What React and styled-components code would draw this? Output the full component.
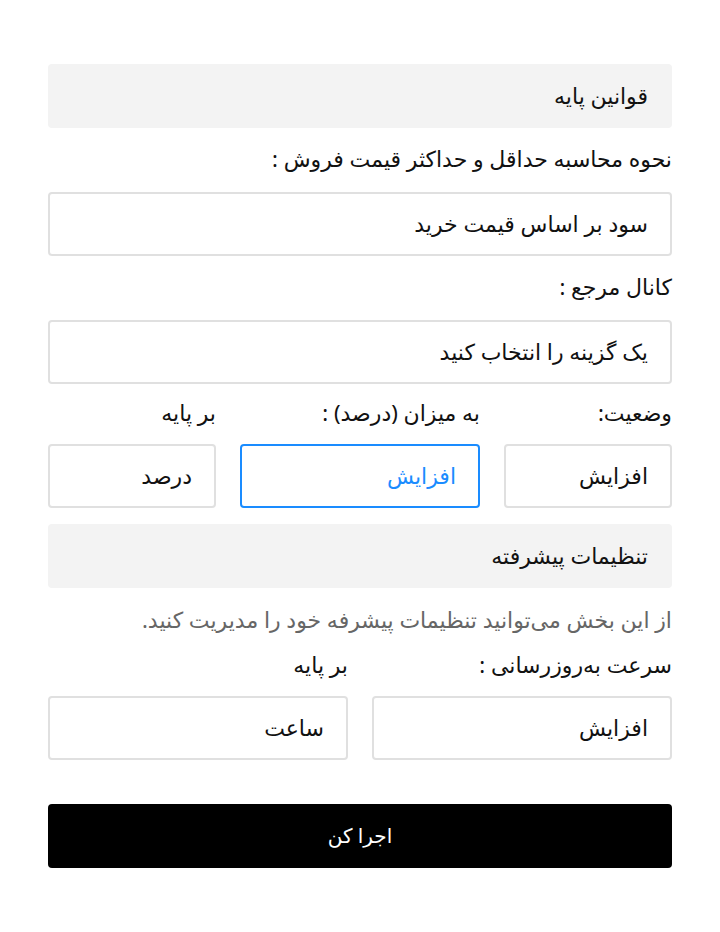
import styled, { createGlobalStyle } from "styled-components";

const GlobalStyle = createGlobalStyle`
  body {
    margin: 0;
    background: #ffffff;
    font-family: "Noto Sans", "DejaVu Sans", sans-serif;
    color: #111111;
  }
`;

const Page = styled.div`
  direction: rtl;
  padding: 64px 48px 64px;
  display: flex;
  flex-direction: column;
  gap: 16px;
`;

const SectionHeader = styled.div`
  height: 64px;
  box-sizing: border-box;
  background: #f3f3f3;
  border-radius: 4px;
  padding: 0 24px 3px;
  display: flex;
  align-items: center;
  font-size: 22px;
`;

const Label = styled.div`
  height: ${(p) => (p.$compact ? "28px" : "32px")};
  box-sizing: border-box;
  padding-bottom: 4px;
  display: flex;
  align-items: center;
  font-size: 22px;
  white-space: nowrap;
`;

const Description = styled.div`
  height: 32px;
  box-sizing: border-box;
  padding-bottom: 3px;
  display: flex;
  align-items: center;
  font-size: 22px;
  color: #666666;
`;

const Field = styled.div`
  height: 64px;
  box-sizing: border-box;
  border: 2px solid ${(p) => (p.$active ? "#1a8cff" : "#e0e0e0")};
  border-radius: 4px;
  padding: 0 22px 3px;
  display: flex;
  align-items: center;
  font-size: 22px;
  color: ${(p) => (p.$active ? "#1a8cff" : "#111111")};
`;

const FieldGrid = styled.div`
  display: grid;
  grid-template-columns: ${(p) => p.$cols};
  column-gap: 24px;
  row-gap: 16px;
`;

const RunButton = styled.button`
  margin-top: 28px;
  height: 64px;
  border: none;
  border-radius: 4px;
  background: #000000;
  color: #ffffff;
  font-family: inherit;
  font-size: 20px;
  padding-bottom: 3px;
  cursor: pointer;
`;

export default function App() {
  return (
    <>
      <GlobalStyle />
      <Page>
        <SectionHeader>قوانین پایه</SectionHeader>
        <Label>نحوه محاسبه حداقل و حداکثر قیمت فروش :</Label>
        <Field>سود بر اساس قیمت خرید</Field>
        <Label>کانال مرجع :</Label>
        <Field>یک گزینه را انتخاب کنید</Field>
        <FieldGrid $cols="168px 240px 168px">
          <Label $compact>وضعیت:</Label>
          <Label $compact>به میزان (درصد) :</Label>
          <Label $compact>بر پایه</Label>
          <Field>افزایش</Field>
          <Field $active>افزایش</Field>
          <Field>درصد</Field>
        </FieldGrid>
        <SectionHeader>تنظیمات پیشرفته</SectionHeader>
        <Description>از این بخش می‌توانید تنظیمات پیشرفه خود را مدیریت کنید.</Description>
        <FieldGrid $cols="1fr 1fr">
          <Label $compact>سرعت به‌روزرسانی :</Label>
          <Label $compact>بر پایه</Label>
          <Field>افزایش</Field>
          <Field>ساعت</Field>
        </FieldGrid>
        <RunButton>اجرا کن</RunButton>
      </Page>
    </>
  );
}
